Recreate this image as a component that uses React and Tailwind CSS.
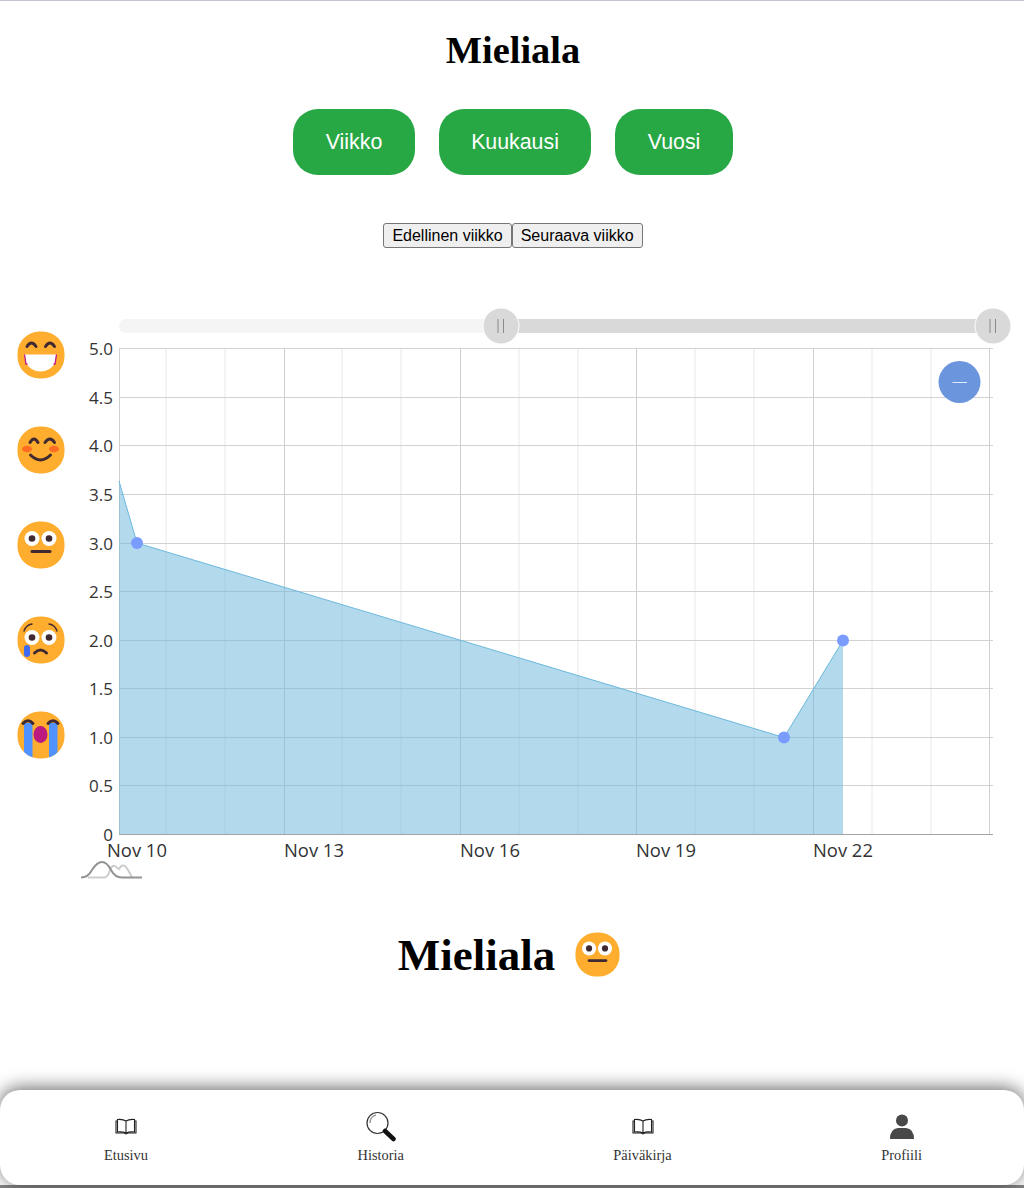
const majorX = [284, 460, 636, 813, 989]
const minorX = [166, 225, 342, 401, 519, 578, 695, 754, 872, 931]
const ticks = [['5.0', 348], ['4.5', 397], ['4.0', 445], ['3.5', 494], ['3.0', 543], ['2.5', 591], ['2.0', 640], ['1.5', 688], ['1.0', 737], ['0.5', 785], ['0', 834]]
const dates = [['Nov 10', 107], ['Nov 13', 284], ['Nov 16', 460], ['Nov 19', 636], ['Nov 22', 813]]
const points = [[137, 543], [784, 737.5], [843, 640.5]]

function Face({ id, size = 48, children }) {
  return (
    <svg width={size} height={size} viewBox="0 0 48 48" className="block shrink-0">
      <clipPath id={id}><rect x="0.5" y="0.5" width="47" height="47" rx="22" /></clipPath>
      <rect x="0.5" y="0.5" width="47" height="47" rx="22" fill="#ffad2e" />
      <g clipPath={`url(#${id})`}>{children}</g>
    </svg>
  )
}

function Grin() {
  return (
    <Face id="grin">
      <path d="M10 15.5 Q14.5 8.5 19 15.5 M28.5 15.5 Q33 8.5 37.5 15.5" fill="none" stroke="#402a32" strokeWidth="3" strokeLinecap="round" />
      <path d="M7.5 23.5 H39.5 L38 32 Q33 40.5 23.5 40.5 Q14 40.5 9 32 Z" fill="#fff" />
      <path d="M7.5 23.5 L9 33 H10.5 M39.5 23.5 L38 33 H36.5" fill="none" stroke="#c2188b" strokeWidth="1.3" />
    </Face>
  )
}

function Smile() {
  return (
    <Face id="smile">
      <ellipse cx="10" cy="23" rx="5" ry="3.2" fill="#ff6d24" />
      <ellipse cx="37" cy="23" rx="5" ry="3.2" fill="#ff6d24" />
      <path d="M13 16.5 Q17 9.5 21 16.5 M28 16.5 Q33 9.5 37.5 16.5" fill="none" stroke="#402a32" strokeWidth="3" strokeLinecap="round" />
      <path d="M13.5 29 Q23.5 39 33.5 29" fill="none" stroke="#402a32" strokeWidth="3" strokeLinecap="round" />
    </Face>
  )
}

function Neutral({ id, size }) {
  return (
    <Face id={id} size={size}>
      <circle cx="15" cy="17.5" r="7.5" fill="#fff" />
      <circle cx="32" cy="17.5" r="7.5" fill="#fff" />
      <circle cx="15" cy="17.5" r="3.3" fill="#402a32" />
      <circle cx="32" cy="17.5" r="3.3" fill="#402a32" />
      <path d="M15 30.5 H33" stroke="#402a32" strokeWidth="3" strokeLinecap="round" />
    </Face>
  )
}

function Tear() {
  return (
    <Face id="tear">
      <path d="M7 15 Q9 9 15 8 M40 15 Q38 9 32 8" fill="none" stroke="#402a32" strokeWidth="1.4" strokeLinecap="round" />
      <circle cx="15" cy="21.5" r="7.5" fill="#fff" />
      <circle cx="32" cy="21.5" r="7.5" fill="#fff" />
      <circle cx="15" cy="21.5" r="3.3" fill="#402a32" />
      <circle cx="32" cy="21.5" r="3.3" fill="#402a32" />
      <rect x="7" y="29" width="6" height="12" rx="3" fill="#3f6bf0" />
      <path d="M17.5 37 Q23.5 31 29.5 37" fill="none" stroke="#402a32" strokeWidth="3" strokeLinecap="round" />
    </Face>
  )
}

function Sob() {
  return (
    <Face id="sob">
      <rect x="7" y="12" width="8.5" height="38" fill="#5092ff" />
      <rect x="32" y="12" width="8.5" height="38" fill="#5092ff" />
      <path d="M6 12.5 Q11 7 16 12.5 M31 12.5 Q36 7 41 12.5" fill="none" stroke="#402a32" strokeWidth="3" strokeLinecap="round" />
      <ellipse cx="23.5" cy="23.5" rx="7" ry="8.5" fill="#bc1a7e" />
    </Face>
  )
}

function Handle({ x }) {
  return (
    <g>
      <circle cx={x} cy="326" r="18" fill="#d9d9d9" stroke="#fff" strokeWidth="1" />
      <path d={`M${x - 3} 319 V333 M${x + 2.5} 319 V333`} stroke="#8a8a8a" strokeWidth="1" />
    </g>
  )
}

function Chart() {
  return (
    <svg width="944" height="580" viewBox="80 305 944 580" className="block shrink-0">
      <rect x="119" y="319" width="874" height="14" rx="7" fill="#f5f5f5" />
      <rect x="501" y="319" width="492" height="14" fill="#d9d9d9" />
      <Handle x={501} />
      <Handle x={993} />

      {minorX.map(x => <path key={x} d={`M${x} 348 V834`} stroke="#e8e8e8" strokeWidth="1" />)}
      {majorX.map(x => <path key={x} d={`M${x + 0.5} 348 V834`} stroke="#cfcfcf" strokeWidth="1" />)}
      <path d="M119.5 348 V834" stroke="#cfcfcf" strokeWidth="1" />
      {ticks.map(([t, y], i) => (
        <g key={t}>
          {i < 10 && <path d={`M119 ${y + 0.5} H993`} stroke="#d2d2d2" strokeWidth="1" />}
          <text x="113" y={y + 6.5} textAnchor="end" fontSize="17" fill="#333" fontFamily="Open Sans, sans-serif">{t}</text>
        </g>
      ))}
      <path d="M119 834.5 H993" stroke="#a3a3a3" strokeWidth="1" />

      <path d="M119 481 L137 543 L784 737.5 L843 640.5 V834 H119 Z" fill="#68b3db" fillOpacity="0.5" />
      <path d="M119 481 L137 543 L784 737.5 L843 640.5" fill="none" stroke="#6bb8dc" strokeWidth="1" />
      {points.map(([x, y]) => <circle key={x} cx={x} cy={y} r="6" fill="#7a9cff" />)}

      {dates.map(([d, x]) => (
        <text key={d} x={x} y="857" fontSize="18.4" fill="#333" fontFamily="Open Sans, sans-serif">{d}</text>
      ))}

      <circle cx="959.5" cy="382" r="21" fill="#6b96de" />
      <path d="M952.5 382.5 H967" stroke="#fff" strokeWidth="1" strokeOpacity="0.8" />

      <path d="M88 877.5 H104 Q108 877.5 110 870 Q112 865 115 866 Q117 868 119 869 Q122 864 125 866 Q128 869 132 877.5" fill="none" stroke="#cdcdcd" strokeWidth="2" />
      <path d="M81 877.5 Q88 877.5 92 870 Q97 862 102 862 Q107 862 111 870 Q115 877.5 122 877.5 H142" fill="none" stroke="#939393" strokeWidth="2" />
    </svg>
  )
}

function BookIcon() {
  return (
    <svg width="22" height="17" viewBox="0 0 22 17" fill="none" stroke="#222" strokeWidth="1.1">
      <path d="M11 3 Q8 1 2.5 1.5 V14 Q8 13.5 11 15 Q14 13.5 19.5 14 V1.5 Q14 1 11 3 Z M11 3 V15" />
      <path d="M2 3 H1 V15 H9 L11 16 L13 15 H21 V3 H20" />
    </svg>
  )
}

function SearchIcon() {
  return (
    <svg width="32" height="31" viewBox="0 0 32 31" fill="none">
      <circle cx="12.5" cy="12" r="10.5" stroke="#333" strokeWidth="1.2" />
      <path d="M5 12 A8 8 0 0 1 11 4" stroke="#999" strokeWidth="1.5" />
      <path d="M20 20 L28.5 28" stroke="#111" strokeWidth="4.5" strokeLinecap="round" />
    </svg>
  )
}

function PersonIcon() {
  return (
    <svg width="26" height="26" viewBox="0 0 26 26" fill="#484848">
      <circle cx="13" cy="6.5" r="6" />
      <path d="M1 25 Q1 15 9 14 H17 Q25 15 25 25 Z" />
    </svg>
  )
}

function NavItem({ icon, label, iconClass }) {
  return (
    <a className="flex flex-col items-center text-[14.4px] leading-4 text-[#333]">
      <span className={`flex h-[32px] items-center justify-center ${iconClass}`}>{icon}</span>
      <span className="mt-[5px]">{label}</span>
    </a>
  )
}

export default function App() {
  return (
    <div className="relative flex h-[1188px] flex-col overflow-hidden border-t border-[#c2c6cf] bg-white font-['Liberation_Serif',serif] text-black">
      <div className="pl-[2px]">
        <h1 className="mt-[27px] text-center text-[38.4px] leading-[44px] font-bold">Mieliala</h1>

        <div className="mt-[37px] flex justify-center gap-6 font-['Liberation_Sans',sans-serif]">
          <button className="h-[66px] w-[122px] rounded-[25px] bg-[#28a745] pt-[1px] text-[21.33px] text-white">Viikko</button>
          <button className="h-[66px] w-[152px] rounded-[25px] bg-[#28a745] pt-[1px] text-[21.33px] text-white">Kuukausi</button>
          <button className="h-[66px] w-[118px] rounded-[25px] bg-[#28a745] pt-[1px] text-[21.33px] text-white">Vuosi</button>
        </div>

        <div className="mt-[48px] flex justify-center font-['Liberation_Sans',sans-serif] text-[16px]">
          <button className="h-[25px] rounded-[3px] border border-[#767676] bg-[#efefef] px-2">Edellinen viikko</button>
          <button className="h-[25px] rounded-[3px] border border-[#767676] bg-[#efefef] px-2">Seuraava viikko</button>
        </div>
      </div>

      <div className="mt-[57px] flex">
        <div className="flex w-[80px] shrink-0 flex-col gap-[47px] pt-[26px] pl-[17px]">
          <Grin />
          <Smile />
          <Neutral id="neutral" />
          <Tear />
          <Sob />
        </div>
        <Chart />
      </div>

      <div className="mt-[40px] flex items-center justify-center gap-5 pr-[6px]">
        <h1 className="text-[45px] leading-[60px] font-bold">Mieliala</h1>
        <div className="mb-[2px]">
          <Neutral id="neutral2" size={45} />
        </div>
      </div>

      <nav className="z-10 mt-auto flex h-[95px] items-start justify-between rounded-[20px] bg-white pt-[20px] pr-[102px] pl-[104px] shadow-[0_-2px_18px_rgba(0,0,0,0.6)]">
        <NavItem icon={<BookIcon />} label="Etusivu" />
        <NavItem icon={<SearchIcon />} label="Historia" />
        <NavItem icon={<BookIcon />} label="Päiväkirja" />
        <NavItem icon={<PersonIcon />} label="Profiili" iconClass="pt-[2px]" />
      </nav>
      <div className="h-[3px] shrink-0 bg-[#858585]" />
    </div>
  )
}
